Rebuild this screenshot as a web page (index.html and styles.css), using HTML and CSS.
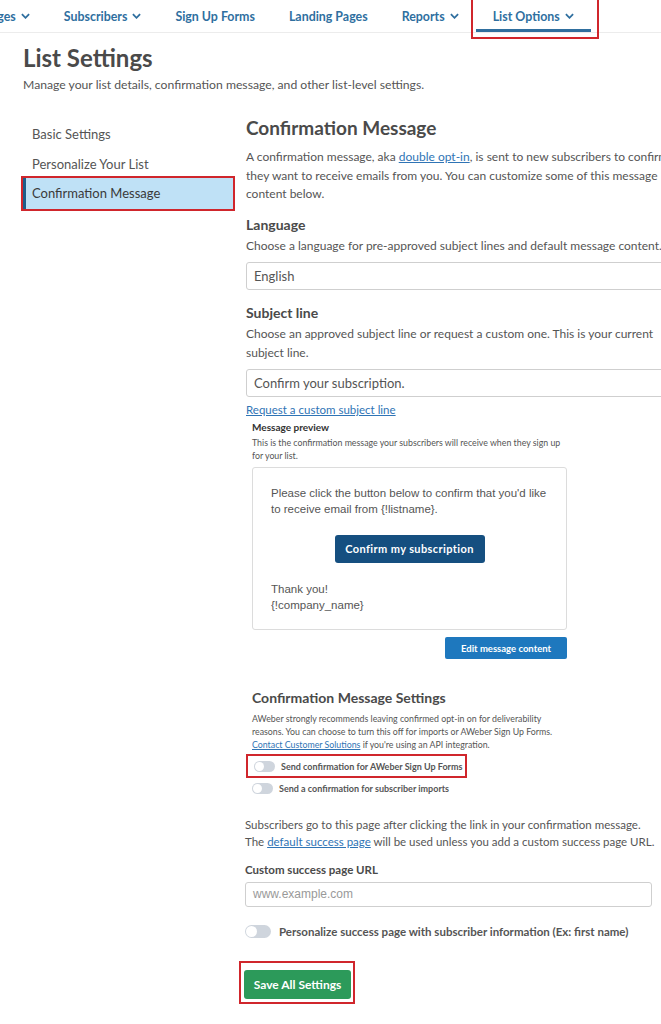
FILE: index.html
```html
<!DOCTYPE html>
<html>

<head>
	<title>List Settings</title>
	<link rel="stylesheet" href="styles.css">
</head>

<body>
	<!-- Thanh menu trên cùng -->
	<nav class="topnav">
		<a class="nav-item">Messages <svg class="chev" viewBox="0 0 10 6"><path d="M1 1l4 4 4-4" /></svg></a>
		<a class="nav-item">Subscribers <svg class="chev" viewBox="0 0 10 6"><path d="M1 1l4 4 4-4" /></svg></a>
		<a class="nav-item">Sign Up Forms</a>
		<a class="nav-item">Landing Pages</a>
		<a class="nav-item">Reports <svg class="chev" viewBox="0 0 10 6"><path d="M1 1l4 4 4-4" /></svg></a>
		<a class="nav-item active">List Options <svg class="chev" viewBox="0 0 10 6"><path d="M1 1l4 4 4-4" /></svg></a>
	</nav>

	<header class="page-head">
		<h1>List Settings</h1>
		<p>Manage your list details, confirmation message, and other list-level settings.</p>
	</header>

	<div class="layout">
		<ul class="side-menu">
			<li>Basic Settings</li>
			<li>Personalize Your List</li>
			<li class="selected">Confirmation Message</li>
		</ul>

		<main class="content">
			<h2>Confirmation Message</h2>
			<p class="text">A confirmation message, aka <a class="link">double opt-in</a>, is sent to new subscribers to confirm they want to receive emails from you. You can customize some of this message content below.</p>

			<h3>Language</h3>
			<p class="text">Choose a language for pre-approved subject lines and default message content.</p>
			<div class="field">English</div>

			<h3>Subject line</h3>
			<p class="text">Choose an approved subject line or request a custom one. This is your current subject line.</p>
			<div class="field">Confirm your subscription.</div>
			<a class="link small-link">Request a custom subject line</a>

			<!-- Xem trước tin nhắn -->
			<div class="preview">
				<h4>Message preview</h4>
				<p class="tiny">This is the confirmation message your subscribers will receive when they sign up for your list.</p>
				<div class="mail-box">
					<p>Please click the button below to confirm that you'd like to receive email from {!listname}.</p>
					<div class="mail-btn-row"><span class="mail-btn">Confirm my subscription</span></div>
					<p>Thank you!<br>{!company_name}</p>
				</div>
				<div class="edit-row"><button class="edit-btn">Edit message content</button></div>
			</div>

			<div class="cm-settings">
				<h4 class="big">Confirmation Message Settings</h4>
				<p class="tiny">AWeber strongly recommends leaving confirmed opt-in on for deliverability reasons. You can choose to turn this off for imports or AWeber Sign Up Forms. <a class="link">Contact Customer Solutions</a> if you're using an API integration.</p>
				<div class="toggle-row marked"><span class="toggle"></span>Send confirmation for AWeber Sign Up Forms</div>
				<div class="toggle-row"><span class="toggle"></span>Send a confirmation for subscriber imports</div>
			</div>

			<div class="success">
				<p>Subscribers go to this page after clicking the link in your confirmation message.<br>The <a class="link">default success page</a> will be used unless you add a custom success page URL.</p>
				<label>Custom success page URL</label>
				<div class="url-field">www.example.com</div>
				<div class="toggle-row wide"><span class="toggle"></span>Personalize success page with subscriber information (Ex: first name)</div>
				<div class="save-wrap"><button class="save-btn">Save All Settings</button></div>
			</div>
		</main>
	</div>
</body>

</html>
```

FILE: styles.css
```css
html,
body {
	overflow: hidden;
}

body {
	margin: 0;
	width: 661px;
	height: 1024px;
	background-color: #fff;
	font-family: Lato, "Open Sans", sans-serif;
	color: #555;
}

/* Thanh menu */
.topnav {
	display: flex;
	height: 32px;
	border-bottom: 1px solid #ececec;
	margin-left: -55px;
	white-space: nowrap;
}

.nav-item {
	position: relative;
	display: flex;
	align-items: center;
	gap: 5px;
	padding: 0 17px;
	height: 32px;
	box-sizing: border-box;
	font-size: 12.4px;
	font-weight: 700;
	color: #2f6f9f;
}

.chev {
	width: 9px;
	height: 6px;
	fill: none;
	stroke: #2f6f9f;
	stroke-width: 2;
}

.nav-item.active {
	border-bottom: 3px solid #2f6f9f;
	padding-top: 3px;
}

.nav-item.active::after {
	content: "";
	position: absolute;
	left: -5px;
	right: -8px;
	top: -2px;
	bottom: -10px;
	border: 2px solid #d0262c;
}

.page-head {
	padding: 10px 23px 0;
}

.page-head h1 {
	margin: 0;
	font-size: 24px;
	font-weight: 700;
	color: #4a4a4a;
}

.page-head p {
	margin: 5px 0 0;
	font-size: 12.2px;
	color: #555;
}

.layout {
	display: flex;
	margin-top: 16px;
}

/* Menu bên trái */
.side-menu {
	list-style: none;
	margin: 11px 0 0 21px;
	padding: 0;
	width: 214px;
	flex: none;
}

.side-menu li {
	height: 30px;
	line-height: 30px;
	padding-left: 11px;
	font-size: 13px;
	color: #555;
}

.side-menu li.selected {
	margin-top: -3px;
	height: 35px;
	line-height: 31px;
	padding-left: 9px;
	background-color: #bfe1f6;
	border: 2px solid #d0262c;
	box-shadow: inset 3px 0 0 #1d5d8a;
	color: #3a3a3a;
	box-sizing: border-box;
}

/* Nội dung chính */
.content {
	margin-left: 11px;
	padding-top: 7px;
	width: 440px;
	flex: none;
}

.content h2 {
	margin: 0;
	font-size: 19px;
	font-weight: 700;
	color: #4a4a4a;
	line-height: 26px;
}

.text {
	margin: 4px 0 0;
	font-size: 12px;
	line-height: 18.5px;
}

.content h2 + .text {
	margin-top: 7px;
}

.content h3 {
	margin: 12px 0 0;
	font-size: 14px;
	font-weight: 700;
	color: #4a4a4a;
}

.field + h3 {
	margin-top: 14px;
}

.link {
	color: #2f74b5;
	text-decoration: underline;
}

.field {
	margin-top: 7px;
	height: 28px;
	line-height: 26px;
	padding-left: 7px;
	border: 1px solid #cfcfcf;
	border-radius: 3px;
	font-size: 13px;
	box-sizing: border-box;
}

.small-link {
	display: block;
	margin-top: 6px;
	font-size: 11.5px;
}

/* Xem trước */
.preview {
	margin-left: 6px;
	width: 315px;
}

.preview h4 {
	margin: 5px 0 0;
	font-size: 10px;
	font-weight: 700;
	color: #333;
}

.tiny {
	margin: 3px 0 0;
	font-size: 8.8px;
	line-height: 13px;
	color: #555;
}

.mail-box {
	margin-top: 5px;
	border: 1px solid #dcdcdc;
	border-radius: 3px;
	padding: 17px 18px 18px;
	height: 163px;
	box-sizing: border-box;
	font-family: "Liberation Sans", Arial, sans-serif;
	font-size: 11.5px;
	line-height: 16px;
	color: #555;
}

.mail-box p {
	margin: 0;
}

.mail-btn-row {
	display: flex;
	justify-content: center;
	margin: 18px 0 18px;
}

.mail-btn {
	width: 150px;
	height: 28px;
	line-height: 28px;
	text-align: center;
	background-color: #154f80;
	border-radius: 3px;
	color: #fff;
	font-family: Lato, sans-serif;
	font-size: 11px;
	font-weight: 700;
	letter-spacing: 0.4px;
}

.edit-row {
	display: flex;
	justify-content: flex-end;
	margin-top: 7px;
}

.edit-btn {
	width: 122px;
	height: 22px;
	border: none;
	border-radius: 2px;
	background-color: #1e78be;
	color: #fff;
	font-family: Lato, sans-serif;
	font-size: 9.5px;
	font-weight: 700;
	padding: 0;
}

/* Cài đặt tin nhắn xác nhận */
.cm-settings {
	margin: 30px 0 0 6px;
	width: 312px;
}

.cm-settings h4.big {
	margin: 0;
	font-size: 14px;
	font-weight: 700;
	color: #4a4a4a;
}

.cm-settings .tiny {
	margin-top: 6px;
}

.toggle-row {
	display: flex;
	align-items: center;
	gap: 6px;
	font-size: 9px;
	font-weight: 700;
	color: #555;
	height: 21px;
}

.toggle-row.marked {
	margin: 3px 0 0 -6px;
	padding-left: 6px;
	width: 221px;
	height: 24px;
	border: 2px solid #d0262c;
	box-sizing: border-box;
}

.toggle {
	width: 21px;
	height: 11px;
	border-radius: 6px;
	background-color: #cfd5dd;
	position: relative;
	flex: none;
}

.toggle::before {
	content: "";
	position: absolute;
	left: 1px;
	top: 1px;
	width: 9px;
	height: 9px;
	border-radius: 50%;
	background-color: #fff;
}

/* Trang thành công */
.success {
	margin: 17px 0 0 -1px;
	width: 420px;
}

.success p {
	margin: 0;
	font-size: 11.5px;
	line-height: 17px;
}

.success label {
	display: block;
	margin-top: 13px;
	font-size: 11.5px;
	font-weight: 700;
	color: #4a4a4a;
}

.url-field {
	margin-top: 6px;
	width: 407px;
	height: 25px;
	line-height: 23px;
	padding-left: 7px;
	border: 1px solid #cfcfcf;
	border-radius: 3px;
	box-sizing: border-box;
	font-family: "Liberation Sans", Arial, sans-serif;
	font-size: 12px;
	color: #999;
}

.toggle-row.wide {
	margin-top: 14px;
	font-size: 11.5px;
	gap: 8px;
	height: 20px;
}

.toggle-row.wide .toggle {
	width: 26px;
	height: 13px;
	border-radius: 7px;
}

.toggle-row.wide .toggle::before {
	width: 11px;
	height: 11px;
}

.save-wrap {
	display: inline-block;
	margin: 20px 0 0 -6px;
	padding: 7px 2px 3px 3px;
	border: 2px solid #d0262c;
}

.save-btn {
	display: block;
	width: 107px;
	height: 29px;
	border: none;
	border-radius: 3px;
	background-color: #2c9a5a;
	color: #fff;
	font-family: Lato, sans-serif;
	font-size: 12px;
	font-weight: 700;
	padding: 0;
}
```
